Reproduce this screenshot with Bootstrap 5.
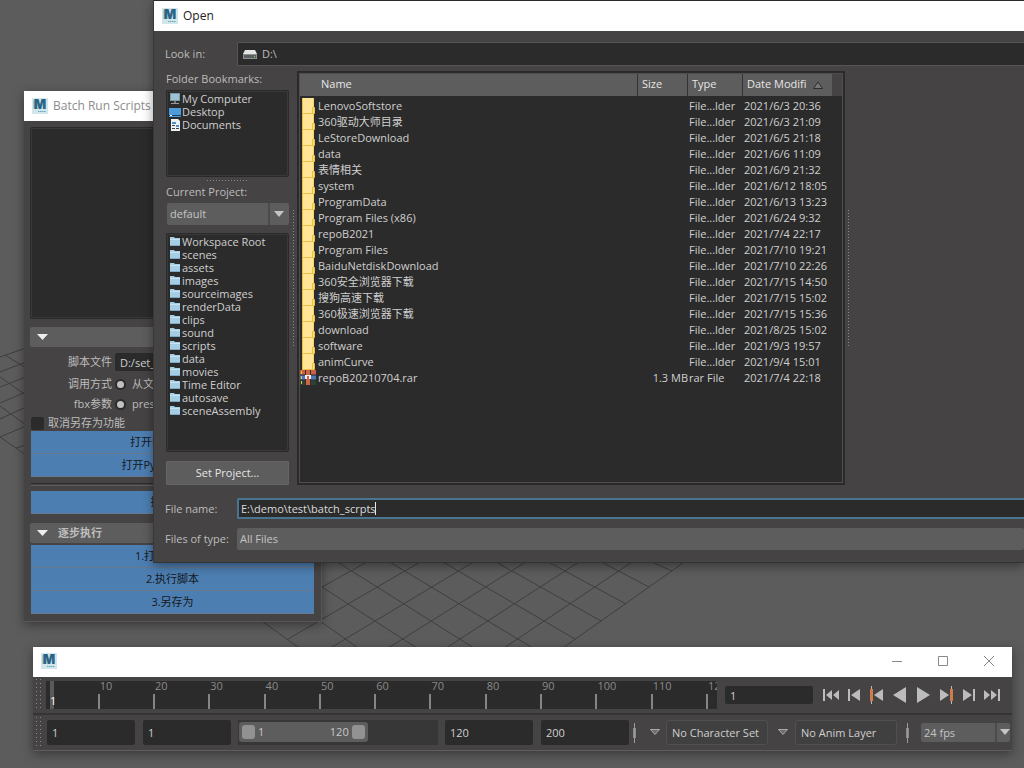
<!DOCTYPE html>
<html lang="zh-CN">
<head>
<meta charset="utf-8">
<meta name="viewport" content="width=device-width, initial-scale=1">
<title>Open</title>
<link href="https://cdn.jsdelivr.net/npm/bootstrap@5.3.0/dist/css/bootstrap.min.css" rel="stylesheet">
<script src="https://cdn.jsdelivr.net/npm/bootstrap@5.3.0/dist/js/bootstrap.bundle.min.js"></script>
<style>
:root { --panel:#454343; --well:#2b2b2b; --ctl:#5d5d5d; --ink:#bdbdbd; --lit:#e6e6e6; --blue:#4d7eb1; }
body { background:#5c5c5c; color:var(--ink); font:11px/16px "Open Sans","Noto Sans CJK SC",sans-serif; min-height:100vh; overflow:hidden; }
input, select, button { font:inherit; color:inherit; border:0; border-radius:0; padding:0; min-width:0; }
.viewport { position:absolute; inset:0; }
.win { position:absolute; background:var(--panel); box-shadow:0 3px 10px rgba(0,0,0,.4); }
.titlebar { background:#fff; height:30px; padding-left:8px; gap:5px; font-size:12px; color:#222; white-space:nowrap; }
.logo { width:16px; height:16px; flex:none; }

/* script runner */
.win-batch { left:24px; top:91px; width:298px; border-right:1px solid #565656; border-bottom:1px solid #565656; }
.win-batch .titlebar { color:#8c8c8c; }
.batch-body { padding:6px 7px 7px; }
.framed { background:var(--well); border:1px solid #2a2a2a; border-radius:2px; box-shadow:inset 0 0 0 1px #393939; }
.log { height:192px; margin:0 -1px 8px; }
.fold { display:flex; align-items:center; width:calc(100% + 1px); margin-left:-1px; height:20px; background:var(--ctl); border-radius:2px; padding-left:7px; gap:10px; font-weight:700; }
.fold::before { content:""; width:11px; height:6px; background:#eee; clip-path:polygon(0 0,100% 0,50% 100%); }
.fold-steps { margin-top:9px; margin-bottom:2px; }
.opts { padding:5px 0 1px; }
.opt { display:flex; align-items:center; height:20px; gap:3px; }
.opt:first-child { margin-bottom:2px; }
.opt-name { width:81px; text-align:right; flex:none; }
.dark { background:var(--well); border-radius:2px; padding-left:5px; color:#d0d0d0; }
.thin { height:18px; }
.radio { appearance:none; width:11px; height:11px; border-radius:50%; background:#c2c2c2; border:2px solid #2d2d2d; margin:0 6px 0 0; }
.check { appearance:none; width:13px; height:13px; background:var(--well); border-radius:2px; margin:0; }
.run { display:block; width:100%; height:23px; background:var(--blue); border-bottom:1px solid #66798d; color:#14181d; }
.rule { height:3px; margin:6px 0 5px; border-top:1px solid #2b2b2b; border-bottom:1px solid #5d5d5d; }

/* open dialog */
.win-open { left:153px; right:0; top:0; border-top:1px solid #2c2a2a; border-left:1px solid #393737; border-bottom:1px solid #333; }
.open-body { padding:11px 0 12px 11px; }
.line-name { width:72px; flex:none; }
.path { height:24px; background:var(--well); border:1px solid #565454; border-right:0; border-radius:2px 0 0 2px; gap:5px; padding-left:5px; }
.side { width:123px; flex:none; margin-left:1px; }
.side-list { margin:0; padding:1px 0 0 1px; list-style:none; line-height:13px; color:#cfcfcf; }
.side-list li { height:13px; display:flex; align-items:center; gap:1px; padding-left:1px; white-space:nowrap; }
.side-list svg { width:12px; height:12px; flex:none; }
.marks { height:87px; }
.dirs { height:219px; }
.dots-h { width:41px; height:1px; margin:3px auto; background:repeating-linear-gradient(90deg,#8a8888 0 1px,transparent 1px 3px); }
.dots-v { width:1px; height:136px; flex:none; align-self:center; background:repeating-linear-gradient(#8a8888 0 1px,transparent 1px 3px); }
.combo { position:relative; background:var(--ctl); height:22px; border-radius:2px; }
.combo select { appearance:none; width:100%; height:100%; background:none; padding-left:3px; color:#c4c4c4; display:block; }
.combo.has-arrow::after { content:""; position:absolute; right:5px; top:8px; width:10px; height:6px; background:#c4c4c4; clip-path:polygon(0 0,100% 0,50% 100%); pointer-events:none; }
.combo.has-arrow select { background:linear-gradient(#4c4b4b,#4c4b4b) right 19px top/2px 100% no-repeat; }
.set { height:24px; margin-top:9px; background:var(--ctl); border:1px solid #666; color:var(--lit); border-radius:1px; }
.files { border:1px solid #2a2a2a; outline:1px solid #4f4d4d; outline-offset:-3px; background:var(--well); padding:2px; margin-right:3px; }
.files table { width:calc(100% - 10px); table-layout:fixed; border-collapse:separate; border-spacing:0; white-space:nowrap; color:#cfcfcf; }
.files-top { background:linear-gradient(var(--panel),var(--panel)) right top/10px 22px no-repeat; }
.files th { height:22px; padding:0 0 2px 4px; background:var(--ctl); color:var(--lit); font-weight:400; border-right:1px solid #333; border-bottom:0; line-height:16px; }
.files th:first-child { padding-left:21px; }
.files th:last-child { border-right:0; }
.files td { height:16px; padding:0 0 0 1px; line-height:16px; overflow:hidden; }
.files td:first-child { padding:0; }
.files td > span { display:flex; height:16px; align-items:center; gap:2px; }
.files tbody::before { content:""; display:block; height:2px; }
.ficon { width:16px; height:16px; flex:none; }
.name-wrap { position:relative; }
.name-wrap::after { content:""; position:absolute; left:138px; top:4px; width:1px; height:13px; background:#e6e6e6; }
.name-in { display:block; width:100%; height:21px; background:var(--well); border:2px solid #4a7590; border-right:0; border-radius:2px 0 0 2px; padding-left:2px; color:#dadada; caret-color:transparent; }
.name-in:focus { outline:0; }
.preview { width:175px; flex:none; }

/* time slider */
.win-time { left:33px; right:12px; top:647px; border-bottom:1px solid #5f5d5d; }
.win-time .titlebar { padding-right:17px; padding-bottom:2px; }
.caption { width:12px; height:12px; background:none; display:flex; }
.grip { width:5px; align-self:stretch; margin:2px 0 2px 3px; background:radial-gradient(circle at .5px .5px,#8a8888 .6px,transparent .8px) 0 0/4px 4px; }
.row-a { height:36px; padding-right:9px; border-bottom:0; }
.row-b { height:37px; padding-right:2px; border-top:2px solid #353333; }
.ruler { height:28px; background:var(--well); margin-left:5px; position:relative; color:#8a8a8a; }
.ruler > div { flex:1 1 0; min-width:0; padding-left:2px; line-height:10px; background:linear-gradient(#858585,#858585) left bottom/2px 15px no-repeat; white-space:nowrap; }
.ruler > .lead-in { flex-grow:.97; background:none; padding:0; }
.ruler > .cut { flex:.17 1 0; overflow-x:clip; }
.now { position:absolute; left:4px; top:0; bottom:0; width:4px; background:#5a5a5a; color:#fff; line-height:40px; }
.num { width:88px; flex:none; height:25px; }
.num.thin { height:18px; margin:0 6px 0 8px; }
.play { width:23px; height:20px; background:none; flex:none; display:flex; align-items:center; justify-content:center; }
.play svg { width:18px; height:18px; }
.range { height:25px; background:#383737; padding:2px 1px; margin:0 7px; }
.range-bar { width:65%; height:20px; background:var(--ctl); border-radius:3px; padding:0 3px; gap:3px; display:flex; align-items:center; color:#c8c8c8; }
.range-bar button { width:13px; height:14px; background:#929292; border-radius:3px; flex:none; }
.tag { width:102px; height:25px; flex:none; background:#414040; border:1px solid #515050; border-radius:3px; color:#cfcfcf; text-align:left; padding-left:5px; }
.mark-v { width:3px; height:20px; flex:none; background:linear-gradient(#9a9a9a,#9a9a9a) center/1px 20px no-repeat,linear-gradient(#8a8a8a,#8a8a8a) center/3px 10px no-repeat; }
.tri { width:10px; height:7px; flex:none; }
.fps { width:89px; flex:none; height:19px; }
.win-time .combo.has-arrow::after { right:0; top:6px; }
.win-time .combo.has-arrow select { background-position:right 13px top; }
</style>
</head>
<body>
<svg class="d-none">
  <symbol id="maya" viewBox="0 0 16 16"><rect width="16" height="16" fill="#d3e6e9"/><path d="M1 2h6v9H1z" fill="#a9ccd2"/><text x="8" y="11" text-anchor="middle" font-family="Inter" font-weight="900" font-size="13" fill="#2a6385">M</text><path d="M6 13.500h8" stroke="#5fa9c6" stroke-dasharray="1.500 .5"/></symbol>
  <symbol id="dir" viewBox="0 0 12 12"><path d="M1 1h4l1 1h5v8H1z" fill="#a5cde4"/><path d="M1 3h10v1H1z" fill="#c8e2f1"/><path d="M1 9h10v1H1z" fill="#7fa9c6"/></symbol>
  <symbol id="folder" viewBox="0 0 16 16"><path d="M2 0h12v16H2z" fill="#f8d36b"/><path d="M3 0h10v15H3z" fill="#ffe595"/><path d="M2.500 0v16M2 15.500h12" stroke="#eac044" fill="none"/><path d="M12.500 9.500h2v6h-2z" fill="#ffe08a" stroke="#eac044"/></symbol>
  <symbol id="rar" viewBox="0 0 16 16"><path d="M0 0h16v5H0z" fill="#c9603f"/><path d="M0 5h16v5H0z" fill="#4c78b4"/><path d="M0 10h16v5H0z" fill="#2d4331"/><path d="M0 5h16M0 10h16" stroke="#2b2b3b"/><path d="M6 0h4v15H6z" fill="#cc6544"/><path d="M5.500 0v15M10.500 0v15" stroke="#3a2a2a"/><path d="M1.500 1v14" stroke="#e8c14a" stroke-dasharray="3 2"/><path d="M5 5h6v4H9V6H7v3H5z" fill="#eee"/></symbol>
  <symbol id="down" viewBox="0 0 10 7"><path d="M.5.500h9L5 5.500z" fill="#6f6e6e" stroke="#aaa"/></symbol>
</svg>

<svg class="viewport" width="1024" height="768" fill="none" stroke="#3f3f3f" aria-hidden="true">
  <path d="M690 558 560 650M638 558 501 650M585 558 443 650M532 558 385 650M480 558 327 650M427 558 288 639M374 558 322 587"/>
  <path d="M643 558 672 571M594 558 649 587M541 558 626 604M489 558 601 621M436 558 575 639M383 558 536 650M331 558 477 650M300 573 420 650M300 607 361 650M255 616 302 650"/>
  <path d="M0 357 26 348M0 372 26 362M0 387 26 377M0 403 26 392M0 419 26 407M0 437 26 426M16 448 26 445M5 355 26 368M0 377 26 395M0 406 26 425M0 437 26 455"/>
</svg>

<section class="win win-batch">
  <div class="titlebar d-flex align-items-center"><svg class="logo"><use href="#maya"/></svg>Batch Run Scripts</div>
  <div class="batch-body">
    <div class="framed log"></div>
    <button class="fold" aria-label="展开"></button>
    <div class="opts">
      <div class="opt"><label class="opt-name" for="script">脚本文件</label><input id="script" class="dark thin flex-grow-1" value="D:/set_"></div>
      <div class="opt"><span class="opt-name">调用方式</span><label class="d-flex align-items-center"><input class="radio" type="radio" name="m1">从文件</label></div>
      <div class="opt"><span class="opt-name">fbx参数</span><label class="d-flex align-items-center"><input class="radio" type="radio" name="m2">preset</label></div>
    </div>
    <label class="d-flex align-items-center gap-1"><input class="check" type="checkbox">取消另存为功能</label>
    <button class="run">打开Mel脚本文件</button>
    <button class="run">打开Python脚本文件</button>
    <div class="rule"></div>
    <button class="run">执行全部</button>
    <button class="fold fold-steps">逐步执行</button>
    <button class="run">1.打开目标文件</button>
    <button class="run">2.执行脚本</button>
    <button class="run">3.另存为</button>
  </div>
</section>

<section class="win win-time">
  <div class="titlebar d-flex align-items-center"><svg class="logo"><use href="#maya"/></svg>
    <div class="d-flex ms-auto" style="gap:34px">
      <button class="caption" aria-label="Minimize"><svg width="12" height="12"><path d="M1 6.500h10" stroke="#888"/></svg></button>
      <button class="caption" aria-label="Maximize"><svg width="12" height="12"><path d="M1.500 1.500h9v9h-9z" fill="none" stroke="#888"/></svg></button>
      <button class="caption" aria-label="Close"><svg width="12" height="12"><path d="M1 1l10 10M11 1 1 11" stroke="#888"/></svg></button>
    </div>
  </div>
  <div class="row-a d-flex align-items-center">
    <div class="grip"></div>
    <div class="ruler d-flex flex-grow-1"><div class="lead-in"></div><div>10</div><div>20</div><div>30</div><div>40</div><div>50</div><div>60</div><div>70</div><div>80</div><div>90</div><div>100</div><div>110</div><div class="cut">120</div><span class="now">1</span></div>
    <input class="dark num thin" value="1" aria-label="Current frame">
    <button class="play" aria-label="Go to start"><svg viewBox="0 0 18 18" fill="#bcbcbc"><path d="M1 3h2v12H1zM10 4v10L4 9zM17 4v10l-6-5z"/></svg></button>
    <button class="play" aria-label="Step back"><svg viewBox="0 0 18 18" fill="#bcbcbc"><path d="M3 3h2v12H3zM15 3v12L6 9z"/></svg></button>
    <button class="play" aria-label="Previous key"><svg viewBox="0 0 18 18" fill="#bcbcbc"><path d="M3 0h1v18H3z"/><path d="M2 3h3v12H2z" fill="#cf7b4a"/><path d="M15 3v12L6 9z"/></svg></button>
    <button class="play" aria-label="Play back"><svg viewBox="0 0 18 18" fill="#bcbcbc"><path d="M15 1v16L2 9z"/></svg></button>
    <button class="play" aria-label="Play"><svg viewBox="0 0 18 18" fill="#bcbcbc"><path d="M3 1v16l13-8z"/></svg></button>
    <button class="play" aria-label="Next key"><svg viewBox="0 0 18 18" fill="#bcbcbc"><path d="M14 0h1v18h-1z"/><path d="M13 3h3v12h-3z" fill="#cf7b4a"/><path d="M3 3v12l9-6z"/></svg></button>
    <button class="play" aria-label="Step forward"><svg viewBox="0 0 18 18" fill="#bcbcbc"><path d="M13 3h2v12h-2zM3 3v12l9-6z"/></svg></button>
    <button class="play" aria-label="Go to end"><svg viewBox="0 0 18 18" fill="#bcbcbc"><path d="M15 3h2v12h-2zM1 4v10l6-5zM8 4v10l6-5z"/></svg></button>
  </div>
  <div class="row-b d-flex align-items-center">
    <div class="grip"></div>
    <input class="dark num" style="margin-left:6px" value="1" aria-label="Animation start">
    <input class="dark num ms-2" value="1" aria-label="Playback start">
    <div class="range flex-grow-1"><div class="range-bar"><button aria-label="Range start"></button><span>1</span><span class="ms-auto">120</span><button aria-label="Range end"></button></div></div>
    <input class="dark num" value="120" aria-label="Playback end">
    <input class="dark num ms-2" value="200" aria-label="Animation end">
    <span class="mark-v ms-1"></span>
    <svg class="tri" style="margin:0 6px 0 14px"><use href="#down"/></svg>
    <button class="tag">No Character Set</button>
    <svg class="tri" style="margin:0 7px 0 10px"><use href="#down"/></svg>
    <button class="tag">No Anim Layer</button>
    <span class="mark-v" style="margin:0 12px 0 9px"></span>
    <div class="combo has-arrow fps"><select aria-label="Frame rate"><option>24 fps</option></select></div>
  </div>
</section>

<section class="win win-open">
  <div class="titlebar d-flex align-items-center"><svg class="logo"><use href="#maya"/></svg>Open</div>
  <div class="open-body">
    <div class="d-flex align-items-center">
      <span class="line-name">Look in:</span>
      <div class="path d-flex align-items-center flex-grow-1"><svg width="14" height="9"><path d="M2 0h10l2 4H0z" fill="#e4e6e6"/><path d="M0 4h14v5H0z" fill="#8c9191"/><path d="M1 5h12v3H1z" fill="#5a6060"/><path d="M11 6h1v1h-1z" fill="#8fd05a"/></svg>D:\</div>
    </div>
    <div class="d-flex" style="margin-top:5px">
      <div class="side d-flex flex-column">
        <div>Folder Bookmarks:</div>
        <ul class="side-list framed marks" style="margin-top:3px">
          <li><svg><path d="M1 0h10v8H1z" fill="#7f9aa5"/><path d="M2 1h8v6H2z" fill="#9fc3d3"/><path d="M5 8h2v2H5z" fill="#777"/><path d="M2 10h8v1H2z" fill="#999"/></svg>My Computer</li>
          <li><svg><path d="M0 2h12v9H0z" fill="#4f9bd9"/><path d="M0 9h12v1H0z" fill="#1d3f66"/><path d="M1 9h2v1H1z" fill="#fff"/></svg>Desktop</li>
          <li><svg><path d="M2 0h7l2 2v10H2z" fill="#eef1f3"/><path d="M3 3h4v2H3zM7 6h3v2H7z" fill="#4f90c4"/><path d="M3 6.500h3M3 9.500h3M7 9.500h3" stroke="#444"/></svg>Documents</li>
        </ul>
        <div class="dots-h"></div>
        <label for="proj">Current Project:</label>
        <div class="combo has-arrow" style="margin:3px 0 8px 1px"><select id="proj"><option>default</option></select></div>
        <ul class="side-list framed dirs">
          <li><svg><use href="#dir"/></svg>Workspace Root</li><li><svg><use href="#dir"/></svg>scenes</li><li><svg><use href="#dir"/></svg>assets</li><li><svg><use href="#dir"/></svg>images</li><li><svg><use href="#dir"/></svg>sourceimages</li><li><svg><use href="#dir"/></svg>renderData</li><li><svg><use href="#dir"/></svg>clips</li><li><svg><use href="#dir"/></svg>sound</li><li><svg><use href="#dir"/></svg>scripts</li><li><svg><use href="#dir"/></svg>data</li><li><svg><use href="#dir"/></svg>movies</li><li><svg><use href="#dir"/></svg>Time Editor</li><li><svg><use href="#dir"/></svg>autosave</li><li><svg><use href="#dir"/></svg>sceneAssembly</li>
        </ul>
        <button class="set">Set Project...</button>
      </div>
      <div class="dots-v" style="margin:0 3px 0 4px"></div>
      <div class="files flex-grow-1">
        <div class="files-top">
        <table>
          <colgroup><col><col style="width:50px"><col style="width:55px"><col style="width:89px"></colgroup>
          <thead><tr><th>Name</th><th>Size</th><th>Type</th><th>Date Modifi <svg class="ms-1" width="10" height="8"><path d="M.5 7.500 5 1l4.500 6.500z" fill="#777" stroke="#2e2e2e"/></svg></th></tr></thead>
          <tbody id="rows"></tbody>
        </table>
        </div>
      </div>
      <div class="dots-v"></div>
      <div class="preview"></div>
    </div>
    <div class="d-flex align-items-center" style="margin-top:13px">
      <label class="line-name" for="fname">File name:</label><div class="name-wrap flex-grow-1"><input id="fname" class="name-in" value="E:\demo\test\batch_scrpts" autofocus></div>
    </div>
    <div class="d-flex align-items-center" style="margin-top:9px">
      <label class="line-name" for="ftype">Files of type:</label><div class="combo flex-grow-1"><select id="ftype"><option>All Files</option></select></div>
    </div>
  </div>
</section>

<script>
const files = [
  ["LenovoSoftstore","2021/6/3 20:36"],["360驱动大师目录","2021/6/3 21:09"],["LeStoreDownload","2021/6/5 21:18"],
  ["data","2021/6/6 11:09"],["表情相关","2021/6/9 21:32"],["system","2021/6/12 18:05"],["ProgramData","2021/6/13 13:23"],
  ["Program Files (x86)","2021/6/24 9:32"],["repoB2021","2021/7/4 22:17"],["Program Files","2021/7/10 19:21"],
  ["BaiduNetdiskDownload","2021/7/10 22:26"],["360安全浏览器下载","2021/7/15 14:50"],["搜狗高速下载","2021/7/15 15:02"],
  ["360极速浏览器下载","2021/7/15 15:36"],["download","2021/8/25 15:02"],["software","2021/9/3 19:57"],
  ["animCurve","2021/9/4 15:01"],["repoB20210704.rar","2021/7/4 22:18","1.3 MB","rar File"]
];
document.getElementById("rows").innerHTML = files.map(([name, date, size = "", type = "File...lder"]) =>
  `<tr><td><span><svg class="ficon"><use href="#${size ? "rar" : "folder"}"/></svg>${name}</span></td><td class="text-end">${size}</td><td>${type}</td><td>${date}</td></tr>`).join("");
</script>
</body>
</html>
